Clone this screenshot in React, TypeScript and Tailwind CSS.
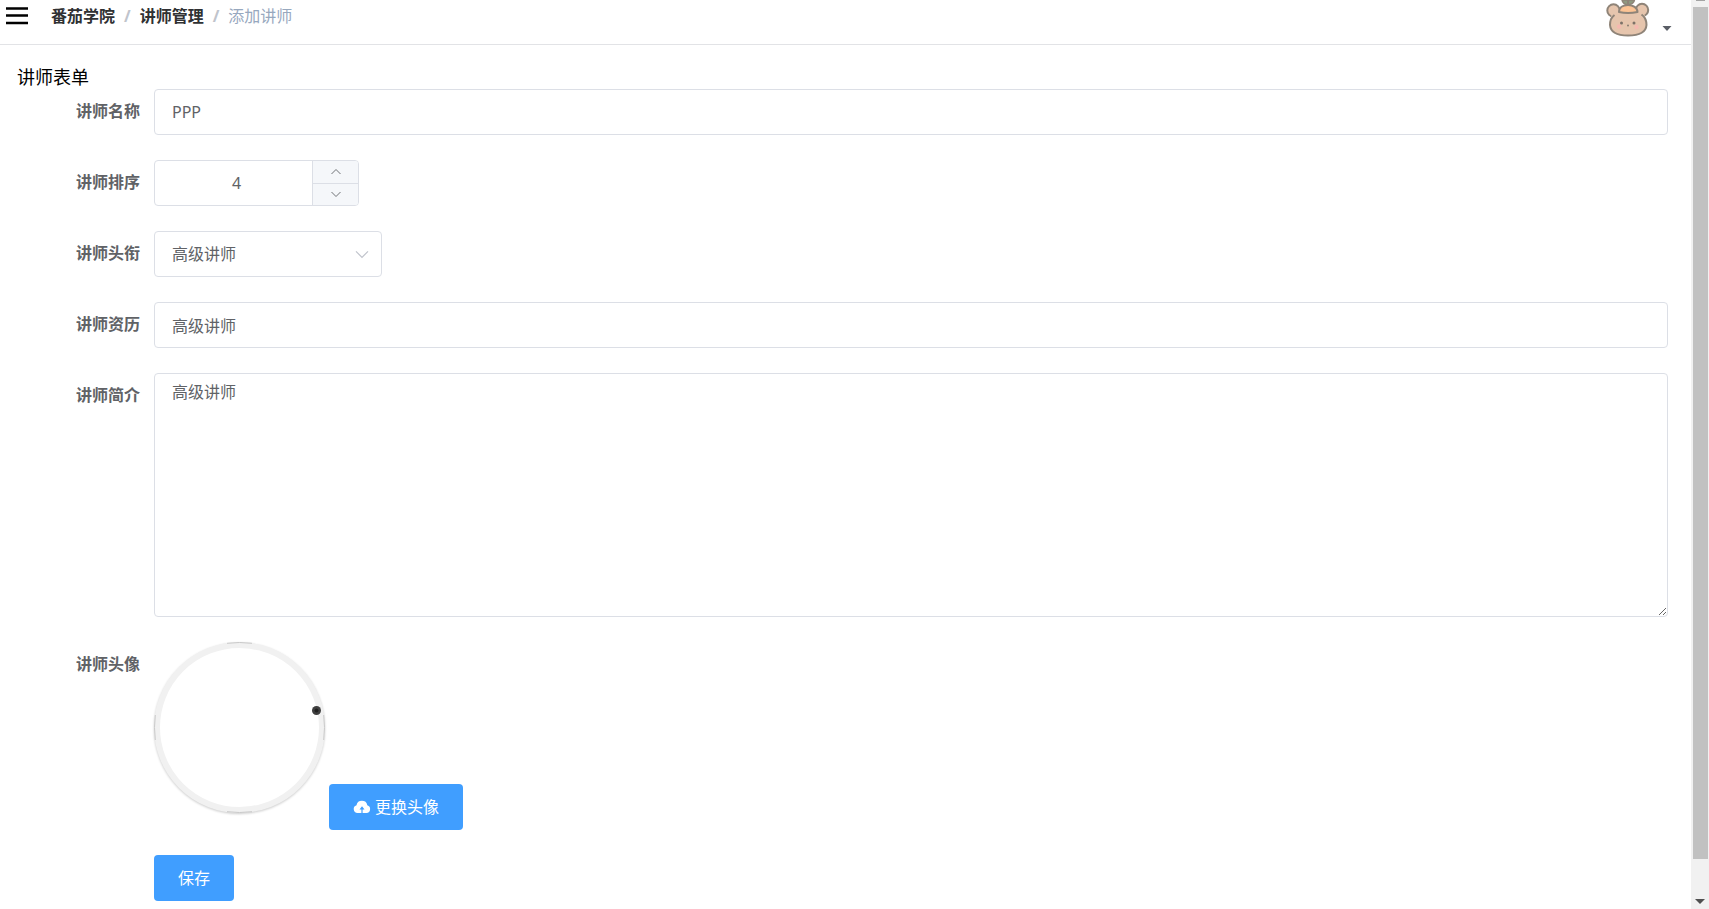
import { useState, type ReactNode } from "react";

const fieldClass =
  "w-full rounded border border-[#dcdfe6] bg-white px-[17px] text-base text-[#606266] outline-none focus:border-[#409eff]";

const buttonClass =
  "flex h-[46px] items-center justify-center rounded bg-[#409eff] px-6 text-base text-white hover:bg-[#66b1ff]";

function FormItem({ label, htmlFor, children }: { label?: string; htmlFor?: string; children: ReactNode }) {
  return (
    <div className="flex items-start">
      <div className="w-[137px] shrink-0 pr-[14px] text-right">
        {label && (
          <label htmlFor={htmlFor} className="block text-base leading-[44px] font-bold text-[#606266]">
            {label}
          </label>
        )}
      </div>
      <div className="min-w-0 flex-1">{children}</div>
    </div>
  );
}

function Chevron({ up, size }: { up?: boolean; size: number }) {
  return (
    <svg width={size} height={size} viewBox="0 0 12 12" fill="none" stroke="currentColor" strokeWidth="0.9">
      <path d={up ? "M1.5 8 6 3.5 10.5 8" : "M1.5 4 6 8.5 10.5 4"} />
    </svg>
  );
}

function BearAvatar() {
  return (
    <svg width="44" height="38" viewBox="0 0 44 38" aria-label="avatar" role="img">
      <g stroke="#8f8478" strokeWidth="2" strokeLinejoin="round">
        <circle cx="7.5" cy="10.5" r="6.2" fill="#e6c5ad" />
        <circle cx="36" cy="10" r="6.2" fill="#e6c5ad" />
        <path
          d="M10 9.500H34C38.500 13 41 19 40.500 25C40 32 34 35.500 22 35.500S4.500 32 4 25C3.500 19 5.500 13 10 9.500Z"
          fill="#e6c5ad"
          stroke="none"
        />
        <path
          d="M8.500 15C5 17.500 4 21 4 25C4.500 32 10 35.500 22 35.500S40 32 40.500 25C40.500 21 39 17 35.500 14.500"
          fill="none"
        />
        <path d="M16 0C16.500 3 19 4.500 22 5C25 4.500 28 3 28.500 0Z" fill="#8f9a80" strokeWidth="1.500" />
        <path d="M13 12C13 7.500 17 5 22 5S31.500 7.500 31.500 12Q22 14 13 12Z" fill="#fcc394" />
        <path d="M22 5V0" />
      </g>
      <circle cx="15.500" cy="23" r="1.500" fill="#7d7268" />
      <circle cx="28" cy="23" r="1.500" fill="#7d7268" />
      <circle cx="22" cy="25.500" r="1" fill="#8a7e72" />
      <circle cx="13" cy="26.500" r="2.200" fill="#f5b9b0" />
      <circle cx="30.500" cy="27" r="2.200" fill="#f5b9b0" />
    </svg>
  );
}

function TeacherAvatar() {
  return (
    <svg width="171" height="171" viewBox="0 0 171 171" className="overflow-visible" role="img" aria-label="讲师头像">
      <circle
        cx="85.500"
        cy="85.500"
        r="82.500"
        fill="#fff"
        stroke="#f1f1f1"
        strokeWidth="6"
        style={{ filter: "drop-shadow(0 1px 1px rgba(0,0,0,.2))" }}
      />
      <g fill="none" stroke="#c4c4c4" strokeWidth="0.9">
        <path d="M73 1.300Q85.500 -.3 98 1.300M73 169.700Q85.500 171.300 98 169.700M1.300 73Q-.3 85.500 1.300 98M169.700 73Q171.300 85.500 169.700 98" />
      </g>
      <circle cx="162.500" cy="68.500" r="4.500" fill="#3e3e3e" />
      <circle cx="162.500" cy="68.500" r="2" fill="#202020" />
    </svg>
  );
}

export default function App() {
  const [name, setName] = useState("PPP");
  const [sort, setSort] = useState(4);
  const [level, setLevel] = useState("高级讲师");
  const [career, setCareer] = useState("高级讲师");
  const [intro, setIntro] = useState("高级讲师");

  return (
    <div className="flex h-screen overflow-hidden bg-white font-['Noto_Sans','Noto_Sans_CJK_SC',sans-serif] text-black">
      <div className="min-w-0 flex-1">
        <header className="flex h-[45px] items-start justify-between border-b border-[#e2e3e6] pr-[19px] pl-[5px]">
          <div className="flex h-8 items-center">
            <button type="button" aria-label="菜单">
              <svg width="24" height="20" viewBox="0 0 24 20" stroke="#000" strokeWidth="2.500">
                <path d="M1 2.500H23M1 9.500H23M1 17H23" />
              </svg>
            </button>
            <nav className="ml-[22px] flex items-center gap-[9px] text-base">
              <a href="#" className="font-bold text-[#303133]">番茄学院</a>
              <span className="font-bold text-[#c0c4cc]">/</span>
              <a href="#" className="font-bold text-[#303133]">讲师管理</a>
              <span className="font-bold text-[#c0c4cc]">/</span>
              <span className="text-[#97a8be]">添加讲师</span>
            </nav>
          </div>
          <button type="button" className="flex items-end gap-3" aria-label="用户菜单">
            <BearAvatar />
            <svg width="10" height="12" viewBox="0 0 10 12" fill="#5a5e66">
              <path d="M.5 0H9.500L5 5Z" />
            </svg>
          </button>
        </header>

        <main className="pt-5 pr-[23px] pl-[17px]">
          <h1 className="text-lg leading-6">讲师表单</h1>
          <form className="flex flex-col gap-[25px]" onSubmit={(e) => e.preventDefault()}>
            <FormItem label="讲师名称" htmlFor="name">
              <input id="name" value={name} onChange={(e) => setName(e.target.value)} className={`${fieldClass} h-[46px]`} />
            </FormItem>

            <FormItem label="讲师排序" htmlFor="sort">
              <div className="flex h-[46px] w-[205px] overflow-hidden rounded border border-[#dcdfe6]">
                <input
                  id="sort"
                  value={sort}
                  onChange={(e) => setSort(Number(e.target.value) || 0)}
                  className="min-w-0 flex-1 pl-[6px] text-center text-base text-[#606266] outline-none"
                />
                <div className="flex w-[46px] flex-col border-l border-[#dcdfe6] bg-[#f5f7fa] text-[#606266]">
                  <button
                    type="button"
                    aria-label="增加"
                    onClick={() => setSort(sort + 1)}
                    className="flex flex-1 items-center justify-center border-b border-[#dcdfe6]"
                  >
                    <Chevron up size={12} />
                  </button>
                  <button
                    type="button"
                    aria-label="减少"
                    onClick={() => setSort(sort - 1)}
                    className="flex flex-1 items-center justify-center"
                  >
                    <Chevron size={12} />
                  </button>
                </div>
              </div>
            </FormItem>

            <FormItem label="讲师头衔" htmlFor="level">
              <div className="relative w-[228px]">
                <select
                  id="level"
                  value={level}
                  onChange={(e) => setLevel(e.target.value)}
                  className={`${fieldClass} h-[46px] appearance-none`}
                >
                  <option>高级讲师</option>
                  <option>首席讲师</option>
                </select>
                <span className="pointer-events-none absolute inset-y-0 right-3 flex items-center text-[#c0c4cc]">
                  <Chevron size={16} />
                </span>
              </div>
            </FormItem>

            <FormItem label="讲师资历" htmlFor="career">
              <input id="career" value={career} onChange={(e) => setCareer(e.target.value)} className={`${fieldClass} h-[46px]`} />
            </FormItem>

            <FormItem label="讲师简介" htmlFor="intro">
              <textarea
                id="intro"
                value={intro}
                onChange={(e) => setIntro(e.target.value)}
                className={`${fieldClass} block h-[244px] resize-y py-[6px] leading-6`}
              />
            </FormItem>

            <FormItem label="讲师头像" htmlFor="avatar">
              <div className="flex h-[188px] items-start gap-1">
                <TeacherAvatar />
                <button id="avatar" type="button" className={`${buttonClass} gap-1 self-end`}>
                  <svg width="18" height="14" viewBox="0 0 18 14" fill="#fff">
                    <path
                      fillRule="evenodd"
                      d="M4.500 13A4 4 0 0 1 3.500 5.200 5.500 5.500 0 0 1 14.300 5.200 4 4 0 0 1 13.500 13H9.600V9.500H11.500L9 6.300 6.500 9.500H8.400V13Z"
                    />
                  </svg>
                  更换头像
                </button>
              </div>
            </FormItem>

            <FormItem>
              <button type="submit" className={buttonClass}>保存</button>
            </FormItem>
          </form>
        </main>
      </div>

      {/* Scroll track */}
      <div className="flex w-[18px] shrink-0 flex-col items-center bg-[#f1f1f1]">
        <div className="h-px w-[9px] bg-[#a3a3a3]" />
        <div className="mt-[6px] w-[15px] flex-1 bg-[#c1c1c1]" />
        <svg width="10" height="50" viewBox="0 0 10 50" fill="#505050">
          <path d="M0 40H10L5 45Z" />
        </svg>
      </div>
    </div>
  );
}
